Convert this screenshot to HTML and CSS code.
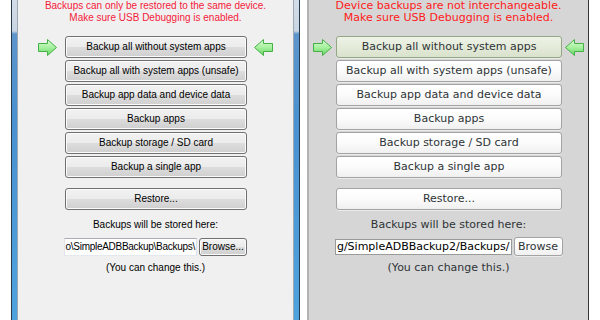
FILE: index.html
```html
<!DOCTYPE html>
<html>
<head>
<meta charset="utf-8">
<link rel="stylesheet" href="styles.css">
</head>
<body class="page">
  <div class="win7">
    <div class="client">
      <div class="warn">Backups can only be restored to the same device.<br>Make sure USB Debugging is enabled.</div>
      <div class="grid">
        <svg class="arrow" viewBox="0 0 19 17"><defs><linearGradient id="g1" x1="0" y1="0" x2="0" y2="1"><stop offset="0" stop-color="#dcfcd6"/><stop offset="0.5" stop-color="#a6f09e"/><stop offset="1" stop-color="#62d462"/></linearGradient></defs><polygon points="0.5,4.5 9.5,4.5 9.5,0.5 18.5,8.5 9.5,16.5 9.5,12.5 0.5,12.5" fill="url(#g1)" stroke="#45b045" stroke-width="1"/></svg>
        <button class="btn">Backup all without system apps</button>
        <svg class="arrow flip" viewBox="0 0 19 17"><defs><linearGradient id="g2" x1="0" y1="0" x2="0" y2="1"><stop offset="0" stop-color="#dcfcd6"/><stop offset="0.5" stop-color="#a6f09e"/><stop offset="1" stop-color="#62d462"/></linearGradient></defs><polygon points="0.5,4.5 9.5,4.5 9.5,0.5 18.5,8.5 9.5,16.5 9.5,12.5 0.5,12.5" fill="url(#g2)" stroke="#45b045" stroke-width="1"/></svg>
        <button class="btn">Backup all with system apps (unsafe)</button>
        <button class="btn">Backup app data and device data</button>
        <button class="btn">Backup apps</button>
        <button class="btn">Backup storage / SD card</button>
        <button class="btn">Backup a single app</button>
        <button class="btn restore">Restore...</button>
      </div>
      <div class="note first">Backups will be stored here:</div>
      <div class="pathrow">
        <div class="field"><span class="path">o\SimpleADBBackup\Backups\</span></div>
        <button class="browse">Browse...</button>
      </div>
      <div class="note">(You can change this.)</div>
    </div>
  </div>

  <div class="gtk">
    <div class="client">
      <div class="warn">Device backups are not interchangeable.<br>Make sure USB Debugging is enabled.</div>
      <div class="grid">
        <svg class="arrow" viewBox="0 0 19 17"><defs><linearGradient id="g3" x1="0" y1="0" x2="0" y2="1"><stop offset="0" stop-color="#dcfcd6"/><stop offset="0.5" stop-color="#a6f09e"/><stop offset="1" stop-color="#62d462"/></linearGradient></defs><polygon points="0.5,4.5 9.5,4.5 9.5,0.5 18.5,8.5 9.5,16.5 9.5,12.5 0.5,12.5" fill="url(#g3)" stroke="#45b045" stroke-width="1"/></svg>
        <button class="btn hot">Backup all without system apps</button>
        <svg class="arrow flip" viewBox="0 0 19 17"><defs><linearGradient id="g4" x1="0" y1="0" x2="0" y2="1"><stop offset="0" stop-color="#dcfcd6"/><stop offset="0.5" stop-color="#a6f09e"/><stop offset="1" stop-color="#62d462"/></linearGradient></defs><polygon points="0.5,4.5 9.5,4.5 9.5,0.5 18.5,8.5 9.5,16.5 9.5,12.5 0.5,12.5" fill="url(#g4)" stroke="#45b045" stroke-width="1"/></svg>
        <button class="btn">Backup all with system apps (unsafe)</button>
        <button class="btn">Backup app data and device data</button>
        <button class="btn">Backup apps</button>
        <button class="btn">Backup storage / SD card</button>
        <button class="btn">Backup a single app</button>
        <button class="btn restore">Restore...</button>
      </div>
      <div class="note first">Backups will be stored here:</div>
      <div class="pathrow">
        <div class="field"><span class="path">g/SimpleADBBackup2/Backups/</span></div>
        <button class="browse">Browse</button>
      </div>
      <div class="note">(You can change this.)</div>
    </div>
  </div>
</body>
</html>
```

FILE: styles.css
```css
* { box-sizing: border-box; }

html, body { margin: 0; padding: 0; }

.page {
  width: 600px;
  height: 320px;
  overflow: hidden;
  background: #ffffff;
  display: flex;
  align-items: stretch;
}

/* ---------- Windows 7 window ---------- */
.win7 {
  margin-left: 11px;
  width: 289px;
  height: 320px;
  padding: 0 5px;
  border-left: 1px solid #26384c;
  border-right: 1px solid #26384c;
  background: linear-gradient(to bottom, #d3dde8 0, #c9d5e2 31px, #5d95cb 34px, #4a91d0 120px, #4ea3dd 320px);
}

.win7 .client {
  height: 100%;
  background: #f0f0f0;
  border-left: 1px solid #9ea8b3;
  border-right: 1px solid #9ea8b3;
  font-family: "Liberation Sans", Arial, sans-serif;
  font-size: 10px;
  color: #000;
}

.win7 .warn { color: #f5203a; }

.win7 .grid { grid-template-columns: 27px 182px 26px; }

.win7 .btn,
.win7 .browse {
  border: 1px solid #707070;
  border-radius: 3px;
  background: linear-gradient(to bottom, #f2f2f2 0, #ebebeb 50%, #dddddd 50%, #cfcfcf 100%);
  box-shadow: inset 0 0 0 1px #fbfbfb;
  color: #000;
  font-family: "Liberation Sans", Arial, sans-serif;
  font-size: 10px;
}

.win7 .pathrow { width: 183px; gap: 2px; }
.win7 .field {
  width: 133px;
  height: 18px;
  border: 1px solid #abadb3;
  border-left-color: #e2e3ea;
  border-right-color: #dbdfe6;
  border-bottom-color: #e3e9ef;
}
.win7 .path { letter-spacing: -0.28px; }
.win7 .browse { width: 48px; height: 18px; padding: 0; }

/* ---------- GTK window ---------- */
.gtk {
  margin-left: 7px;
  width: 282px;
  height: 320px;
  border-left: 2px solid #b2b2b2;
  border-right: 1px solid #353535;
}

.gtk .client {
  height: 100%;
  background: #d6d6d6;
  font-family: "DejaVu Sans", sans-serif;
  font-size: 11px;
  color: #2e3436;
}

.gtk .warn { color: #ff1a1a; }

.gtk .grid { grid-template-columns: 23px 226px 22px; }

.gtk .btn,
.gtk .browse {
  border: 1px solid #a3a3a3;
  border-radius: 3px;
  background: linear-gradient(to bottom, #ffffff 0, #fbfbfb 50%, #f0f0f0 100%);
  box-shadow: 0 1px 0 rgba(255,255,255,0.5);
  color: #2e3436;
  font-family: "DejaVu Sans", sans-serif;
  font-size: 11px;
}

.gtk .btn.hot {
  background: linear-gradient(to bottom, #eef3e6 0, #e4ebda 50%, #d9e2cc 100%);
  border-color: #95a685;
}

.gtk .pathrow { width: 228px; gap: 2px; }
.gtk .field {
  width: 177px;
  height: 16px;
  border: 1px solid #9a9a9a;
  color: #000;
}
.gtk .browse { width: 49px; height: 19px; padding: 0; }

/* ---------- shared ---------- */
.warn {
  text-align: center;
  line-height: 12px;
  white-space: nowrap;
}

.grid {
  display: grid;
  justify-content: center;
  row-gap: 2px;
  margin-top: 12px;
}

.grid .btn { grid-column: 2; }

.btn {
  height: 22px;
  padding: 0;
  line-height: 18px;
  text-align: center;
  white-space: nowrap;
}

.restore { margin-top: 8px; }

.arrow {
  width: 19px;
  height: 17px;
  align-self: center;
  grid-column: 1;
  grid-row: 1;
  justify-self: start;
}

.arrow.flip {
  grid-column: 3;
  justify-self: end;
  transform: scaleX(-1);
}

.note {
  text-align: center;
  line-height: 12px;
  margin-top: 6px;
  white-space: nowrap;
}

.note.first { margin-top: 9px; }

.pathrow {
  display: flex;
  align-items: center;
  margin: 6px auto 0;
  height: 19px;
}

.field {
  background: #fff;
  overflow: hidden;
  display: flex;
  justify-content: flex-end;
  align-items: center;
  white-space: nowrap;
  padding-right: 1px;
}

.browse {
  line-height: 15px;
  text-align: center;
  white-space: nowrap;
}
```
